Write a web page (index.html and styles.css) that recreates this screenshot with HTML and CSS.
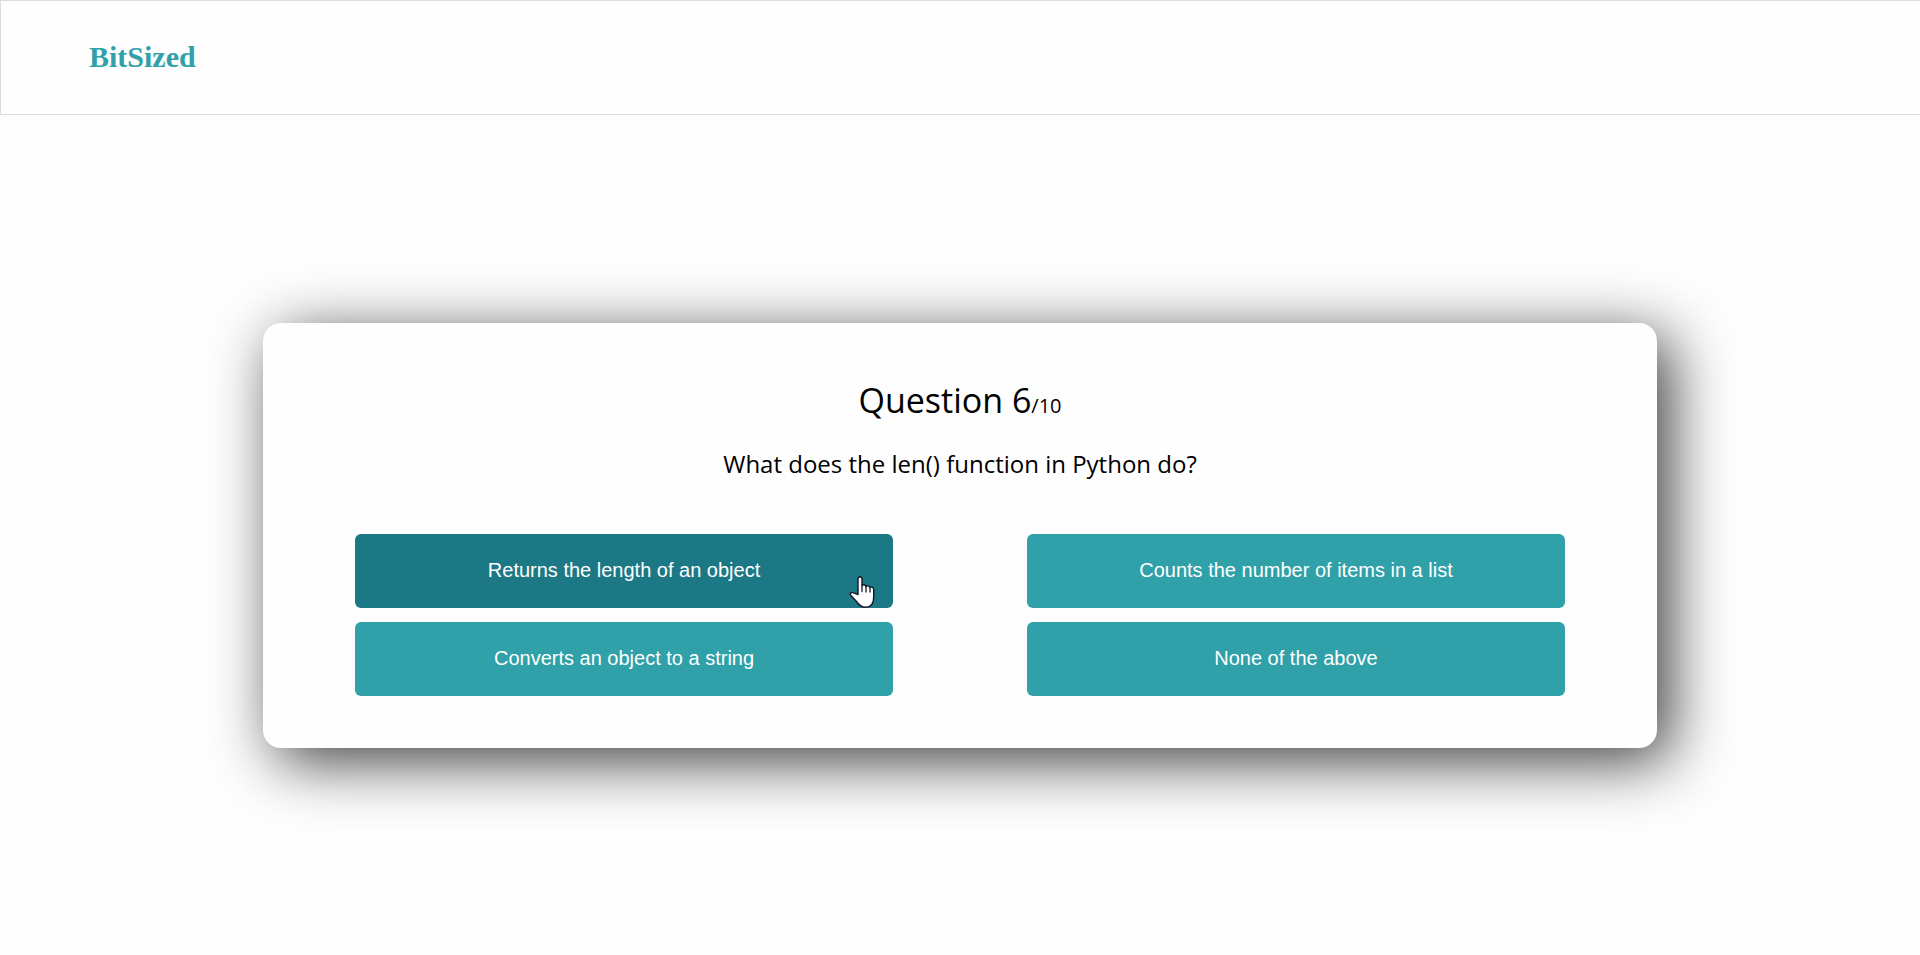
FILE: index.html
```
<!DOCTYPE html>
<html lang="en">
<head>
<meta charset="utf-8">
<title>BitSized</title>
<link rel="stylesheet" href="styles.css">
</head>
<body>
<header class="site-header">
  <h1 class="brand">BitSized</h1>
</header>
<main class="stage">
  <section class="card">
    <h2 class="counter">Question 6<span class="total">/10</span></h2>
    <p class="prompt">What does the len() function in Python do?</p>
    <div class="answers">
      <button class="answer active" type="button">Returns the length of an object
        <svg class="pointer" width="26" height="34" viewBox="0 0 26 34" aria-hidden="true">
          <path d="M9 19.5V4C9 .9 13 .9 13 4V10.5C14 9.2 16.500 9.500 17 11.500C18 10.300 20.500 10.700 21 12.500C22.500 11.500 24.700 12.500 24.700 14.500V22C24.700 29 21.500 32.300 16.500 32.300C12 32.300 9.500 29.500 7.500 26.500L1.700 20.200C.5 18.300 2.700 16.600 4.500 17.800Z" fill="#fff" stroke="#15182b" stroke-width="1.400" stroke-linejoin="round"/>
          <path d="M13 10V16.500M17 11.500V17M21 12.500V17" fill="none" stroke="#15182b" stroke-width="1.300" stroke-linecap="round"/>
        </svg>
      </button>
      <button class="answer" type="button">Counts the number of items in a list</button>
      <button class="answer" type="button">Converts an object to a string</button>
      <button class="answer" type="button">None of the above</button>
    </div>
  </section>
</main>
</body>
</html>
```
FILE: styles.css
```
* { box-sizing: border-box; }

body {
  margin: 0;
  min-height: 100vh;
  display: flex;
  flex-direction: column;
  overflow-x: hidden;
  background: #fefefe;
  color: #000;
  font-family: "Segoe UI", "Open Sans", sans-serif;
}

.site-header {
  padding: 39px 88px 41px;
  border: 1px solid #ddd;
  border-right: 0;
}

.brand {
  margin: 0;
  color: #30a0a9;
  font: bold 30px/33px "Liberation Serif", serif;
}

.stage {
  flex: 1;
  display: flex;
  align-items: center;
  justify-content: center;
}

.card {
  width: 72.6%;
  padding: 53px 92px 52px;
  border-radius: 18px;
  background: #fefefe;
  box-shadow: 13px 13px 62px rgba(0, 0, 0, 0.76);
  text-align: center;
}

.counter {
  margin: 0 0 16px;
  font-size: 34px;
  font-weight: 400;
  line-height: 48px;
}

.total {
  font-size: 20px;
  line-height: 1;
}

.prompt {
  margin: 0 0 46px;
  font-size: 24px;
  line-height: 48px;
}

.answers {
  display: grid;
  grid-template-columns: 1fr 1fr;
  gap: 14px 134px;
}

.answer {
  position: relative;
  min-height: 74px;
  padding: 23px 16px 25px;
  border: 0;
  border-radius: 6px;
  background: #30a0a9;
  color: #fff;
  font: 20px/24px "Liberation Sans", Arial, sans-serif;
  cursor: pointer;
}

.active { background: #1c7885; }

.pointer {
  position: absolute;
  right: 18px;
  bottom: -1px;
}
```
